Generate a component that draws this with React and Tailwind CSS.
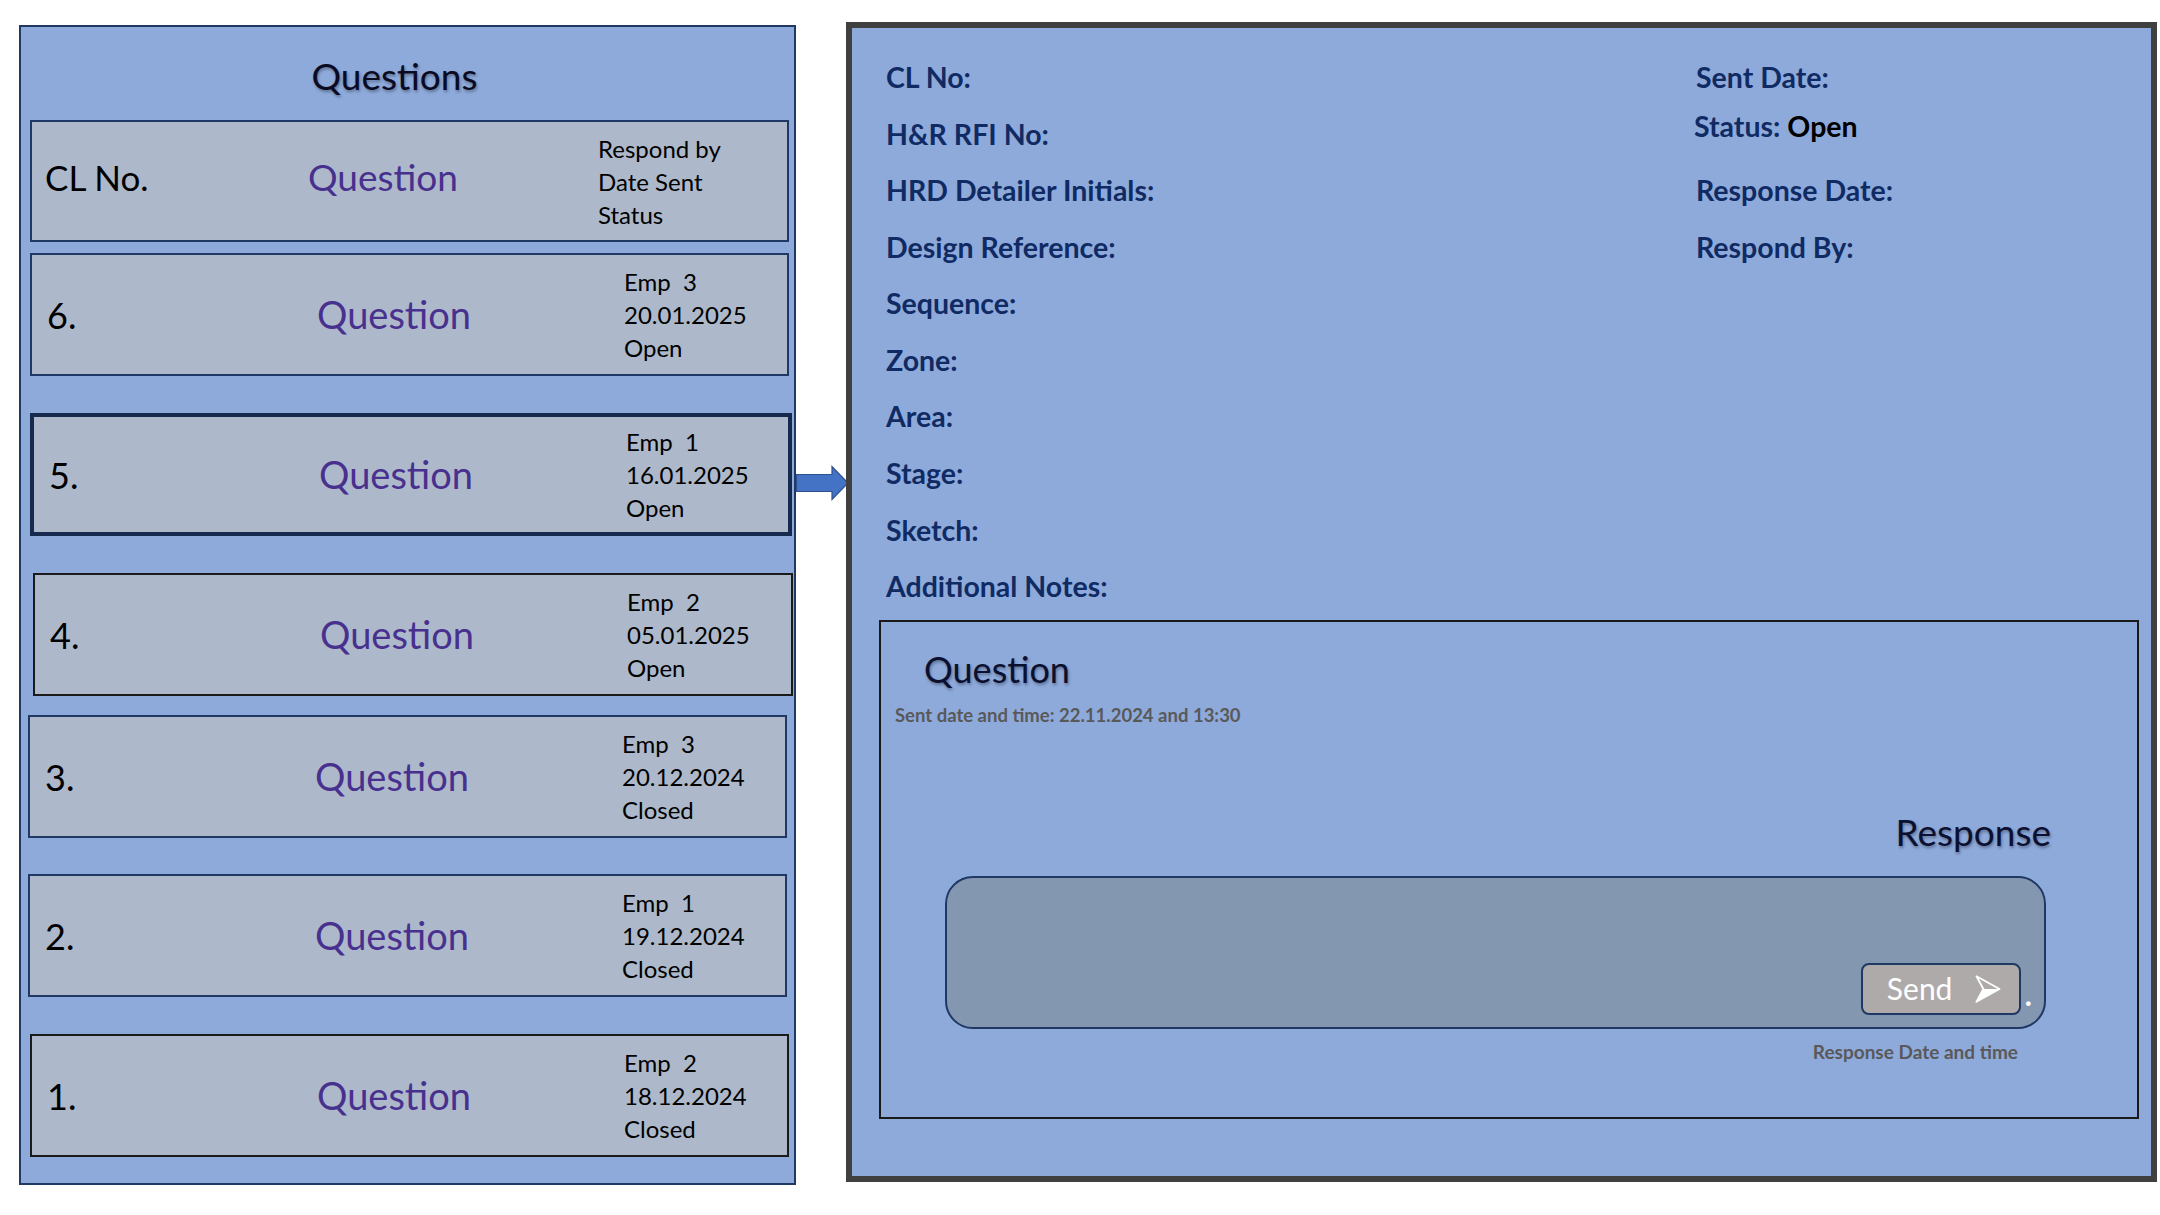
import React from "react";

const font = { fontFamily: "Lato, 'Open Sans', sans-serif" };

const cards = [
  { no: "6.", emp: "Emp  3", date: "20.01.2025", status: "Open", cls: "mt-[11px] ml-[9px] w-[759px] border-2 border-[#1f3864]" },
  { no: "5.", emp: "Emp  1", date: "16.01.2025", status: "Open", cls: "mt-[37px] ml-[9px] w-[762px] border-[4px] border-[#162a4d]" },
  { no: "4.", emp: "Emp  2", date: "05.01.2025", status: "Open", cls: "mt-[37px] ml-[12px] w-[760px] border-2 border-[#1a1a1a]" },
  { no: "3.", emp: "Emp  3", date: "20.12.2024", status: "Closed", cls: "mt-[19px] ml-[7px] w-[759px] border-2 border-[#1f3864]" },
  { no: "2.", emp: "Emp  1", date: "19.12.2024", status: "Closed", cls: "mt-[36px] ml-[7px] w-[759px] border-2 border-[#1f3864]" },
  { no: "1.", emp: "Emp  2", date: "18.12.2024", status: "Closed", cls: "mt-[37px] ml-[9px] w-[759px] border-2 border-[#1a1a1a]" },
];

const leftLabels = [
  "CL No:",
  "H&R RFI No:",
  "HRD Detailer Initials:",
  "Design Reference:",
  "Sequence:",
  "Zone:",
  "Area:",
  "Stage:",
  "Sketch:",
  "Additional Notes:",
];

const shadow = "[text-shadow:1px_2px_3px_rgba(0,0,0,0.35)]";

const QuestionCard = ({ c }) => (
  <div className={`flex h-[123px] shrink-0 items-center bg-[#adb9ca] ${c.cls}`}>
    <div className="w-[244px] pl-[15px] text-[36px] text-black">{c.no}</div>
    <div className="w-[236px] text-center text-[38px] text-[#48308f]">Question</div>
    <div className="ml-[112px] flex flex-col text-[24px] leading-[33px] text-black">
      <span className="whitespace-pre">{c.emp}</span>
      <span>{c.date}</span>
      <span>{c.status}</span>
    </div>
  </div>
);

const SendIcon = () => (
  <svg width="28" height="30" viewBox="0 0 24 26">
    <path d="M2 2 L22 13 L2 24 L8 13 Z" fill="none" stroke="white" strokeWidth="1.6" strokeLinejoin="round" />
    <path d="M8 13 L22 13 L2 24 Z" fill="white" />
  </svg>
);

export default function App() {
  return (
    <div className="flex h-[1215px] w-[2160px] items-start bg-white" style={font}>
      {/* questions list */}
      <div className="ml-[19px] mt-[25px] flex h-[1160px] w-[777px] shrink-0 flex-col border-2 border-[#1f3864] bg-[#8eaadb]">
        <h1 className={`pr-[26px] pt-[27px] text-center text-[37px] leading-[44px] text-[#0a0a23] ${shadow}`}>Questions</h1>
        <div className="mt-[22px] ml-[9px] flex h-[122px] w-[759px] items-center border-2 border-[#1f3864] bg-[#adb9ca]">
          <div className="-mt-[8px] w-[230px] pl-[13px] text-[35px] text-black">CL No.</div>
          <div className="-mt-[8px] w-[242px] text-center text-[37px] text-[#48308f]">Question</div>
          <div className="ml-[94px] flex flex-col text-[24px] leading-[33px] text-black">
            <span>Respond by</span>
            <span>Date Sent</span>
            <span>Status</span>
          </div>
        </div>
        {cards.map((c, i) => (
          <QuestionCard key={i} c={c} />
        ))}
      </div>

      {/* arrow */}
      <svg className="mt-[465px] shrink-0" width="53" height="36" viewBox="0 0 53 36">
        <path d="M0.5 9.5 H36 V1.5 L52 18 L36 34.5 V26.5 H0.5 Z" fill="#4472c4" stroke="#2f528f" strokeWidth="1.2" />
      </svg>

      {/* detail */}
      <div className="-ml-[3px] mt-[22px] flex h-[1160px] w-[1311px] shrink-0 flex-col border-[6px] border-[#404040] bg-[#8eaadb]">
        <div className="flex pl-[34px] pt-[21px] text-[28.5px] font-bold text-[#102a63]">
          <div className="flex w-[810px] flex-col">
            {leftLabels.map((l) => (
              <div key={l} className="flex h-[56.6px] items-center">
                {l}
              </div>
            ))}
          </div>
          <div className="flex flex-col">
            <div className="flex h-[56.6px] items-center">Sent Date:</div>
            <div className="-ml-[2px] -mt-[8px] flex h-[56.6px] items-center">
              Status:&nbsp;<span className="text-black">Open</span>
            </div>
            <div className="mt-[8px] flex h-[56.6px] items-center">Response Date:</div>
            <div className="flex h-[56.6px] items-center">Respond By:</div>
          </div>
        </div>

        <div className="ml-[27px] mt-[5px] flex h-[499px] w-[1260px] flex-col border-2 border-[#1a1a1a]">
          <h2 className={`pl-[43px] pt-[25px] text-[36px] leading-[44px] text-[#0c1030] ${shadow}`}>Question</h2>
          <p className="mt-[13px] pl-[14px] text-[18.5px] font-bold leading-[22px] text-[#595959]">
            Sent date and time: 22.11.2024 and 13:30
          </p>
          <h2 className={`mt-[84px] pr-[86px] text-right text-[37px] leading-[44px] text-[#0c1030] ${shadow}`}>Response</h2>
          <div className="ml-[64px] mt-[22px] flex h-[153px] w-[1101px] items-end justify-end rounded-[28px] border-2 border-[#1f3864] bg-[#8497b0] pb-[12px] pr-[12px]">
            <button className="flex h-[52px] w-[160px] items-center rounded-[8px] border-2 border-[#1f3864] bg-[#aeaaaa] pl-[24px] text-[30px] text-white">
              Send
              <span className="ml-[22px] flex">
                <SendIcon />
              </span>
            </button>
            <span className="mb-[6px] ml-[4px] text-[30px] font-bold leading-none text-white">.</span>
          </div>
          <p className="mt-[12px] pr-[119px] text-right text-[19px] font-bold leading-[22px] text-[#595959]">
            Response Date and time
          </p>
        </div>
      </div>
    </div>
  );
}
